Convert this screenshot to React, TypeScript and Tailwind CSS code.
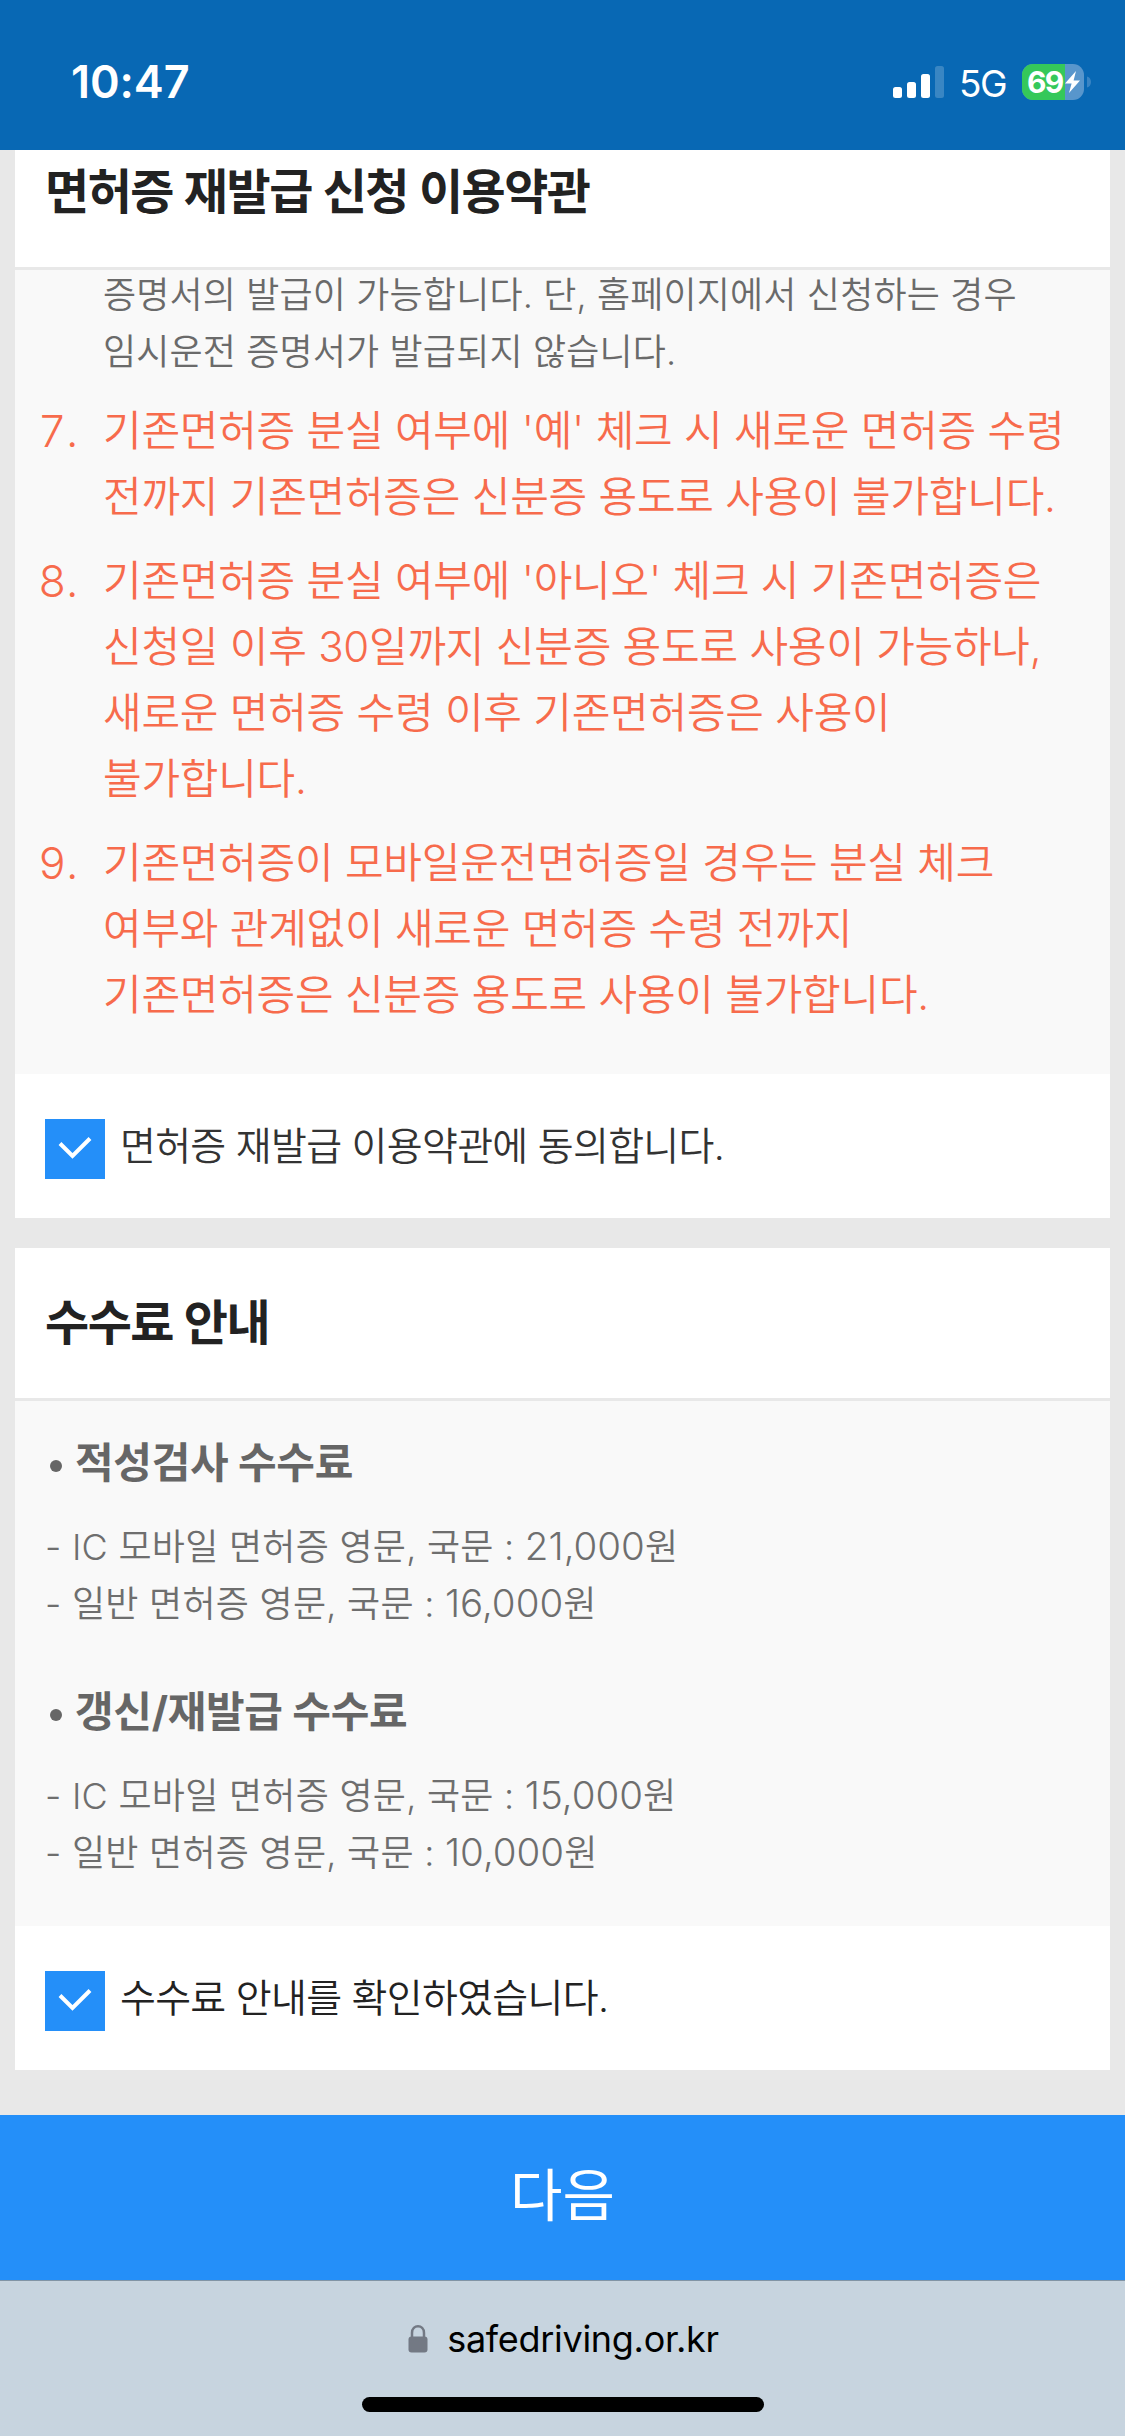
import React from "react";

function StatusBar() {
  return (
    <header className="flex h-[150px] shrink-0 items-start bg-[#0868b4] pr-[33px] pl-[71px] pt-[55px] text-white">
      <div className="h-[54px] flex-1 text-[45px] leading-[54px] font-semibold tracking-[-0.1px]">10:47</div>
      <svg width="52" height="33" viewBox="0 0 52 33" className="mt-[11px]" fill="currentColor">
        <rect x="0" y="21" width="9" height="11" rx="2.5" />
        <rect x="14" y="16" width="9" height="16" rx="2.5" />
        <rect x="28" y="8" width="9" height="24" rx="2.5" />
        <rect x="42" y="0" width="9" height="32" rx="2.5" opacity="0.2" />
      </svg>
      <div className="ml-[14px] w-[48px] text-[37px] leading-[57px] whitespace-nowrap tracking-[-1.5px]">5G</div>
      <div className="relative mt-[9px] ml-[15px] h-9 w-[70px]">
        <svg width="70" height="36" viewBox="0 0 70 36" className="block">
          <defs>
            <clipPath id="battery">
              <rect width="62" height="36" rx="11" />
            </clipPath>
          </defs>
          <g clipPath="url(#battery)">
            <rect width="62" height="36" fill="#5896cc" />
            <rect width="43" height="36" fill="#35c85a" />
          </g>
          <path d="M65 12.500c2.700.8 4 3 4 5.500s-1.300 4.700-4 5.500z" fill="#3984c3" />
          <path d="M54 7 43 19.500h6.600l-2.600 9.500L58 16.500h-6.400z" fill="#fff" />
        </svg>
        <span className="absolute top-0 left-[5px] text-[30px] leading-9 font-bold tracking-[-1.8px]">69</span>
      </div>
    </header>
  );
}

function CheckRow({ label, color }: { label: string; color: string }) {
  return (
    <label className="flex h-36 items-start bg-white pt-[45px] pl-[30px]">
      <span className="flex size-[60px] items-center justify-center bg-[#248ff9]">
        <svg width="34" height="24" viewBox="0 0 34 24" fill="none" stroke="#fff" strokeWidth="4">
          <path d="M2 6.500 14.500 19 32 1.500" />
        </svg>
      </span>
      <span className={`-mt-[3px] ml-[15px] text-[39px] leading-[60px] font-[350] whitespace-nowrap tracking-[-0.7px] ${color}`}>{label}</span>
    </label>
  );
}

function TermItem({ number, lines }: { number: number; lines: string[] }) {
  return (
    <li className="flex">
      <span className="w-[65px] text-[44px] tabular-nums">{number}.</span>
      <div>
        {lines.map((line) => (
          <p key={line} className="whitespace-nowrap">{line}</p>
        ))}
      </div>
    </li>
  );
}

type Fee = { name: string; price: string };

function FeeGroup({ title, fees }: { title: string; fees: Fee[] }) {
  return (
    <section>
      <h3 className="flex h-[66px] items-center text-[42px] leading-[66px] font-bold tracking-[-0.3px] text-[#666]">
        <span className="mt-[6px] mr-[13px] ml-[5px] size-3 rounded-full bg-[#666]" />
        {title}
      </h3>
      <div className="mt-[22px] text-[36px] leading-[57px] font-[350] tracking-[0.25px] text-[#6e6e6e]">
        {fees.map((fee) => (
          <p key={fee.name} className="h-[57px] whitespace-nowrap">
            - {fee.name} : <span className="text-[38.5px] font-light tracking-[0px]">{fee.price}</span>원
          </p>
        ))}
      </div>
    </section>
  );
}

export default function App() {
  return (
    <div className="flex h-[2436px] w-[1125px] flex-col overflow-hidden bg-[#e8e8e8] font-['Inter','Noto_Sans_CJK_KR',sans-serif]">
      <StatusBar />
      <main className="flex h-[1965px] shrink-0 flex-col gap-[30px] px-[15px]">
        <section>
          <h2 className="h-[120px] border-b-[3px] border-[#e8e8e8] bg-white pt-[12px] pl-[30px] text-[48px] leading-[60px] font-bold tracking-[-1.5px] text-[#222] [word-spacing:1px]">
            면허증 재발급 신청 이용약관
          </h2>
          <div className="h-[804px] overflow-hidden bg-[#f9f9f9]">
            <div className="-mt-[3px] pl-[88px] text-[36px] leading-[57px] font-[350] tracking-[0.14px] text-[#6a6a6a]">
              <p className="whitespace-nowrap">증명서의 발급이 가능합니다. 단, 홈페이지에서 신청하는 경우</p>
              <p className="whitespace-nowrap">임시운전 증명서가 발급되지 않습니다.</p>
            </div>
            <ol className="mt-[17px] flex flex-col gap-[18px] pl-[23px] text-[42px] leading-[66px] font-[350] tracking-[-0.24px] text-[#f76b4c]">
              <TermItem number={7} lines={["기존면허증 분실 여부에 '예' 체크 시 새로운 면허증 수령", "전까지 기존면허증은 신분증 용도로 사용이 불가합니다."]} />
              <TermItem number={8} lines={["기존면허증 분실 여부에 '아니오' 체크 시 기존면허증은", "신청일 이후 30일까지 신분증 용도로 사용이 가능하나,", "새로운 면허증 수령 이후 기존면허증은 사용이", "불가합니다."]} />
              <TermItem number={9} lines={["기존면허증이 모바일운전면허증일 경우는 분실 체크", "여부와 관계없이 새로운 면허증 수령 전까지", "기존면허증은 신분증 용도로 사용이 불가합니다."]} />
            </ol>
          </div>
          <CheckRow label="면허증 재발급 이용약관에 동의합니다." color="text-[#333]" />
        </section>
        <section>
          <h2 className="h-[153px] border-b-[3px] border-[#e8e8e8] bg-white pl-[30px] text-[48px] leading-[150px] font-bold tracking-[-1.5px] text-[#222] [word-spacing:1px]">수수료 안내</h2>
          <div className="flex h-[525px] flex-col gap-[47px] bg-[#f9f9f9] pt-[29px] pl-[30px]">
            <FeeGroup
              title="적성검사 수수료"
              fees={[
                { name: "IC 모바일 면허증 영문, 국문", price: "21,000" },
                { name: "일반 면허증 영문, 국문", price: "16,000" },
              ]}
            />
            <FeeGroup
              title="갱신/재발급 수수료"
              fees={[
                { name: "IC 모바일 면허증 영문, 국문", price: "15,000" },
                { name: "일반 면허증 영문, 국문", price: "10,000" },
              ]}
            />
          </div>
          <CheckRow label="수수료 안내를 확인하였습니다." color="text-[#222]" />
        </section>
      </main>
      <button className="h-[165px] shrink-0 bg-[#248ff9] pb-[3px] text-[57px] text-white">다음</button>
      <footer className="flex flex-1 flex-col items-center border-t border-[#8194a5] bg-[#c7d4df]">
        <div className="mt-[34px] ml-[2px] flex h-[48px] items-center text-black">
          <svg width="20" height="28" viewBox="0 0 20 28" className="mr-[19px]">
            <path d="M4 13V8c0-9 12-9 12 0v5" fill="none" stroke="#737984" strokeWidth="2.500" />
            <rect x="0.500" y="11.500" width="19" height="16" rx="3" fill="#737984" />
          </svg>
          <span className="text-[36px] leading-[48px] tracking-[-0.3px]">safedriving.or.kr</span>
        </div>
        <div className="mt-[34px] h-[15px] w-[402px] rounded-full bg-black" />
      </footer>
    </div>
  );
}
